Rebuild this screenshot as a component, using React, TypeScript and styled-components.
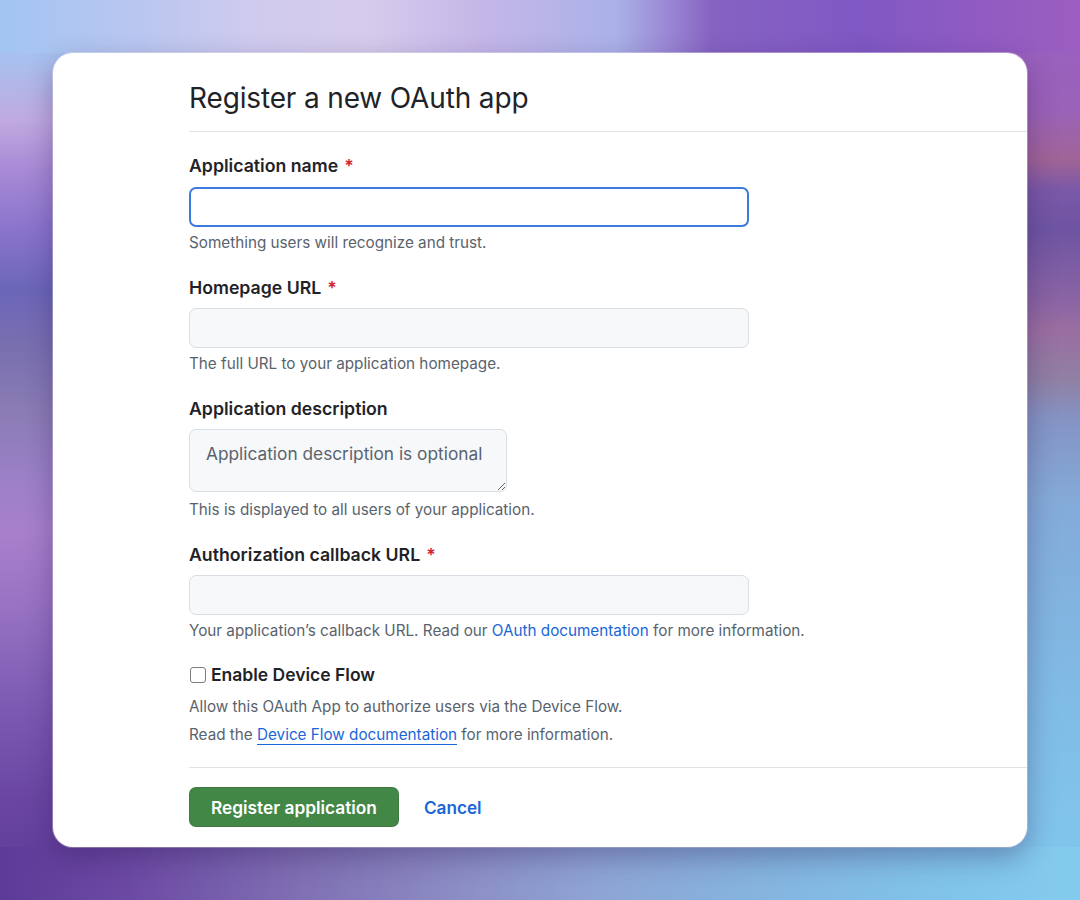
import React from "react";
import styled, { createGlobalStyle } from "styled-components";

const GlobalStyle = createGlobalStyle`
  * { box-sizing: border-box; }
  html, body { margin: 0; padding: 0; }
  body {
    font-family: Inter, "Noto Sans", "Liberation Sans", sans-serif;
    color: #1f2328;
  }
`;

const Page = styled.div`
  min-height: 900px;
  width: 1080px;
  padding: 53px 53px;
  background-color: #8a70c0;
  background-image:
    linear-gradient(to right, #a2c5f2 0%, #b8c6f0 12%, #d0cbee 24%, #d6cbec 34%, #c4b6e8 45%, #aab2e8 57%, #9a86d4 62%, #8662c2 66%, #8158c4 80%, #925cc2 92%, #9c5ec0 100%),
    linear-gradient(to right, #5e3a98 0%, #6c4aa4 12%, #8070b4 28%, #8c8cc4 42%, #8ea4d4 55%, #84b6e0 72%, #80c4ea 88%, #84ccee 100%),
    linear-gradient(to bottom, #a4c4f2 0px, #a8c0ee 60px, #c0aae0 120px, #a88ad6 170px, #8a74cc 230px, #6c66b8 290px, #7a70b0 350px, #8a7cb4 410px, #9c80c8 480px, #a880cc 530px, #9a74c4 600px, #7e5cb4 700px, #6a46a2 800px, #5e3a98 900px),
    linear-gradient(to bottom, #9a5ec2 0px, #9a62b8 110px, #a06496 160px, #7a58a8 190px, #6e54a2 230px, #8a64a4 300px, #9a6ea0 330px, #9080a4 380px, #8494c4 420px, #84aad8 500px, #80bce6 700px, #80c8ee 900px);
  background-size: 100% 53px, 100% 53px, 50% 100%, 50% 100%;
  background-position: top left, bottom left, left top, right top;
  background-repeat: no-repeat;
`;

const Card = styled.main`
  background: #ffffff;
  border-radius: 20px;
  box-shadow: 0 10px 28px rgba(40, 20, 80, 0.35), 0 0 0 1px rgba(255, 255, 255, 0.4);
  padding: 27px 0 20px 136px;
  overflow: hidden;
`;

const Header = styled.header`
  padding-bottom: 15px;
  border-bottom: 1px solid #dfe3e8;
`;

const Title = styled.h1`
  margin: 0;
  font-size: 28px;
  font-weight: 400;
  line-height: 36px;
  letter-spacing: -0.15px;
  color: #1f2328;
`;

const Form = styled.form`
  display: flex;
  flex-direction: column;
  padding-top: 23px;
`;

const Field = styled.div<{ $last?: boolean }>`
  display: flex;
  flex-direction: column;
  align-items: flex-start;
  margin-bottom: ${(p) => (p.$last ? 0 : 24)}px;
`;

const Label = styled.label<{ $gap?: number }>`
  font-size: 17.7px;
  font-weight: 600;
  line-height: 22px;
  color: #1f2328;
  margin-bottom: ${(p) => p.$gap ?? 9}px;
`;

const Required = styled.span`
  color: #d1242f;
  margin-left: 6px;
  font-weight: 600;
`;

const TextInput = styled.input<{ $focused?: boolean }>`
  width: 560px;
  height: 40px;
  border-radius: 7px;
  font: inherit;
  font-size: 16px;
  padding: 0 12px;
  outline: none;
  background: ${(p) => (p.$focused ? "#ffffff" : "#f6f8fa")};
  border: ${(p) => (p.$focused ? "2px solid #3b7be0" : "1px solid #d8dee4")};
`;

const TextArea = styled.textarea`
  display: block;
  width: 318px;
  height: 63px;
  border-radius: 7px;
  background: #f6f8fa;
  border: 1px solid #d8dee4;
  font-family: inherit;
  font-size: 17.3px;
  line-height: 24px;
  padding: 12px 16px;
  color: #1f2328;
  resize: both;
  outline: none;
  &::placeholder {
    color: #59636e;
  }
`;

const Note = styled.p<{ $gap?: number }>`
  margin: ${(p) => p.$gap ?? 6}px 0 0;
  font-size: 15.25px;
  line-height: 20px;
  color: #59636e;
`;

const Link = styled.a<{ $underline?: boolean }>`
  color: #1a66d8;
  text-decoration: ${(p) => (p.$underline ? "underline" : "none")};
  text-underline-offset: 4px;
  text-decoration-thickness: 1px;
`;

const CheckRow = styled.label`
  display: flex;
  align-items: center;
  gap: 5px;
  font-size: 17.5px;
  font-weight: 600;
  line-height: 22px;
  color: #1f2328;
`;

const Box = styled.span`
  display: inline-block;
  width: 16px;
  height: 16px;
  border: 1px solid #7d7d7d;
  border-radius: 3px;
  background: #fff;
  margin-left: 1px;
`;

const DeviceBlock = styled.div`
  display: flex;
  flex-direction: column;
  padding-top: 23px;
  padding-bottom: 22px;
  border-bottom: 1px solid #dfe3e8;
`;

const Footer = styled.div`
  display: flex;
  align-items: center;
  gap: 25px;
  padding-top: 19px;
`;

const PrimaryButton = styled.button`
  height: 40px;
  padding: 0 21px;
  border-radius: 7px;
  border: 1px solid rgba(31, 35, 40, 0.12);
  background: #438746;
  color: #ffffff;
  font-family: inherit;
  font-size: 17.3px;
  font-weight: 600;
`;

const CancelLink = styled.a`
  color: #1a66d8;
  font-size: 17.2px;
  font-weight: 600;
  text-decoration: none;
`;

export default function App() {
  return (
    <>
      <GlobalStyle />
      <Page>
        <Card>
          <Header>
            <Title>Register a new OAuth app</Title>
          </Header>
          <Form onSubmit={(e) => e.preventDefault()}>
            <Field>
              <Label $gap={10}>
                Application name<Required>*</Required>
              </Label>
              <TextInput $focused />
              <Note>Something users will recognize and trust.</Note>
            </Field>
            <Field>
              <Label>
                Homepage URL<Required>*</Required>
              </Label>
              <TextInput />
              <Note>The full URL to your application homepage.</Note>
            </Field>
            <Field>
              <Label>Application description</Label>
              <TextArea placeholder="Application description is optional" />
              <Note $gap={8}>This is displayed to all users of your application.</Note>
            </Field>
            <Field $last>
              <Label>
                Authorization callback URL<Required>*</Required>
              </Label>
              <TextInput />
              <Note>
                Your application’s callback URL. Read our <Link href="#">OAuth documentation</Link> for more
                information.
              </Note>
            </Field>
            <DeviceBlock>
              <CheckRow>
                <Box />
                Enable Device Flow
              </CheckRow>
              <Note $gap={11}>Allow this OAuth App to authorize users via the Device Flow.</Note>
              <Note $gap={8}>
                Read the <Link href="#" $underline>Device Flow documentation</Link> for more information.
              </Note>
            </DeviceBlock>
            <Footer>
              <PrimaryButton type="button">Register application</PrimaryButton>
              <CancelLink href="#">Cancel</CancelLink>
            </Footer>
          </Form>
        </Card>
      </Page>
    </>
  );
}
